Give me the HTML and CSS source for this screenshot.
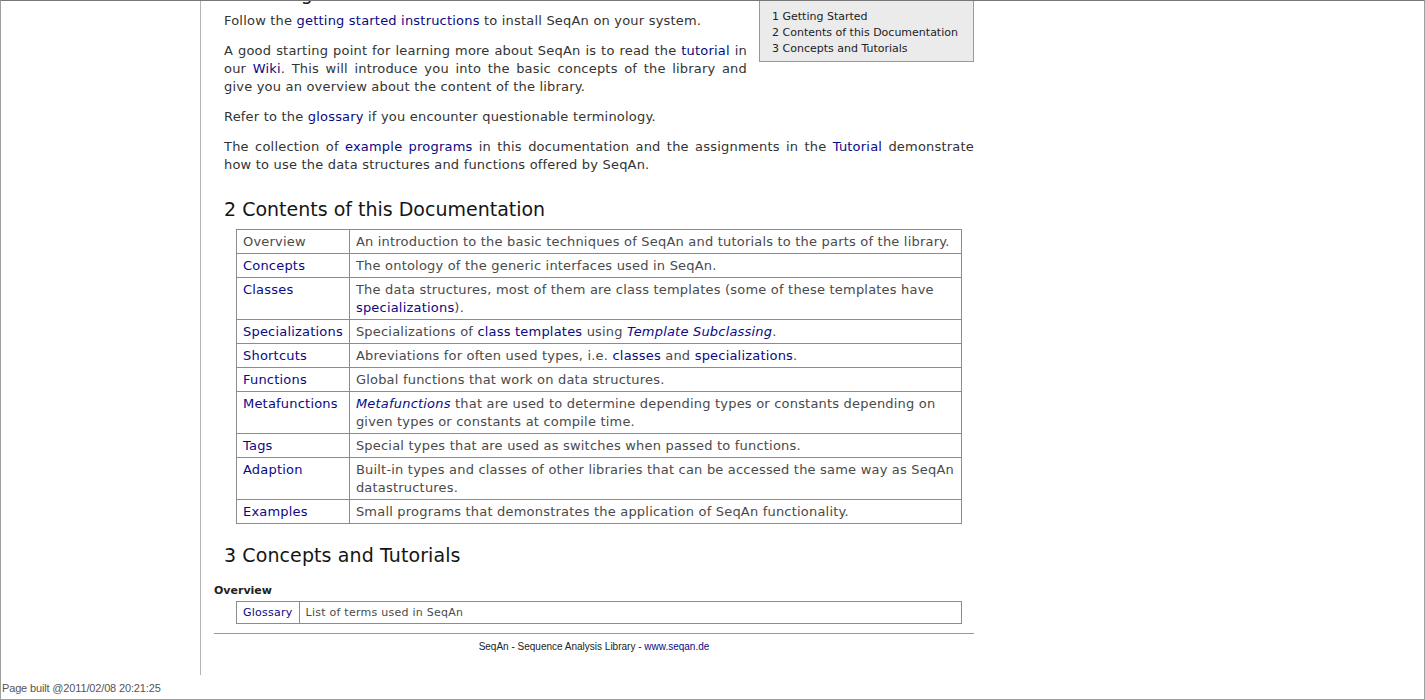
FILE: index.html
```html
<!DOCTYPE html>
<html>
<head>
<meta charset="utf-8">
<title>SeqAn Documentation</title>
<link rel="stylesheet" href="styles.css">
</head>
<body>
<div class="frame">
  <div class="layout">
    <div class="nav"></div>
    <div class="main">
      <div class="content">
        <div class="toc">
          <div class="toc-item">1 Getting Started</div>
          <div class="toc-item">2 Contents of this Documentation</div>
          <div class="toc-item">3 Concepts and Tutorials</div>
        </div>
        <h2 class="heading heading-first">1 Getting Started</h2>
        <p class="para">Follow the <a href="#">getting started instructions</a> to install SeqAn on your system.</p>
        <p class="para">A good starting point for learning more about SeqAn is to read the <a href="#">tutorial</a> in our <a href="#">Wiki</a>. This will introduce you into the basic concepts of the library and give you an overview about the content of the library.</p>
        <p class="para">Refer to the <a href="#">glossary</a> if you encounter questionable terminology.</p>
        <p class="para">The collection of <a href="#">example programs</a> in this documentation and the assignments in the <a href="#">Tutorial</a> demonstrate how to use the data structures and functions offered by SeqAn.</p>

        <h2 class="heading">2 Contents of this Documentation</h2>
        <table class="doc-table">
          <tr><td class="key plain">Overview</td><td>An introduction to the basic techniques of SeqAn and tutorials to the parts of the library.</td></tr>
          <tr><td class="key"><a href="#">Concepts</a></td><td>The ontology of the generic interfaces used in SeqAn.</td></tr>
          <tr><td class="key"><a href="#">Classes</a></td><td>The data structures, most of them are class templates (some of these templates have <a href="#">specializations</a>).</td></tr>
          <tr><td class="key"><a href="#">Specializations</a></td><td>Specializations of <a href="#">class templates</a> using <a href="#" class="em">Template Subclassing</a>.</td></tr>
          <tr><td class="key"><a href="#">Shortcuts</a></td><td>Abreviations for often used types, i.e. <a href="#">classes</a> and <a href="#">specializations</a>.</td></tr>
          <tr><td class="key"><a href="#">Functions</a></td><td>Global functions that work on data structures.</td></tr>
          <tr><td class="key"><a href="#">Metafunctions</a></td><td><a href="#" class="em">Metafunctions</a> that are used to determine depending types or constants depending on given types or constants at compile time.</td></tr>
          <tr><td class="key"><a href="#">Tags</a></td><td>Special types that are used as switches when passed to functions.</td></tr>
          <tr><td class="key"><a href="#">Adaption</a></td><td>Built-in types and classes of other libraries that can be accessed the same way as SeqAn datastructures.</td></tr>
          <tr><td class="key"><a href="#">Examples</a></td><td>Small programs that demonstrates the application of SeqAn functionality.</td></tr>
        </table>

        <h2 class="heading heading-third">3 Concepts and Tutorials</h2>
        <div class="subhead">Overview</div>
        <table class="doc-table small-table">
          <tr><td class="key-small"><a href="#">Glossary</a></td><td>List of terms used in SeqAn</td></tr>
        </table>
        <hr class="rule">
        <div class="footer">SeqAn - Sequence Analysis Library - <a href="#">www.seqan.de</a></div>
      </div>
    </div>
  </div>
  <div class="built">Page built @2011/02/08 20:21:25</div>
</div>
</body>
</html>
```

FILE: styles.css
```css
html, body {
  margin: 0;
  padding: 0;
  background: #ffffff;
}

body {
  font-family: "DejaVu Sans", Verdana, sans-serif;
  color: #333333;
}

a {
  color: #0a0a85;
  text-decoration: none;
}

a.em {
  font-style: italic;
}

.frame {
  width: 1425px;
  height: 700px;
  box-sizing: border-box;
  border: 1px solid #a0a0a0;
  border-top-color: #777777;
  overflow: hidden;
  display: flex;
  flex-direction: column;
}

.layout {
  display: flex;
  height: 674px;
  flex: none;
}

.nav {
  width: 200px;
  box-sizing: border-box;
  border-right: 1px solid #b4b4b4;
  flex: none;
}

.main {
  flex: 1;
  overflow: hidden;
}

.content {
  width: 760px;
  margin: -20px 0 0 13px;
}

.toc {
  float: right;
  width: 215px;
  box-sizing: border-box;
  margin-left: 12px;
  padding: 27px 8px 4px 12px;
  background: #ebebeb;
  border: 1px solid #999999;
  font-size: 11px;
  line-height: 16px;
  color: #222222;
}

.heading {
  font-size: 19px;
  line-height: 24px;
  font-weight: normal;
  color: #151515;
  margin: 23px 0 8px 10px;
}

.heading-first {
  margin: 0 0 7px 10px;
}

.heading-third {
  margin-top: 19px;
  letter-spacing: 0.1px;
}

.para {
  font-size: 13px;
  line-height: 18px;
  letter-spacing: 0.2px;
  text-align: justify;
  margin: 0 0 12px 10px;
}

.doc-table {
  border-collapse: collapse;
  width: 726px;
  margin: 0 0 0 22px;
  font-size: 13px;
  line-height: 18px;
  letter-spacing: 0.2px;
  color: #4a4a4a;
}

.doc-table td {
  border: 1px solid #8c8c8c;
  padding: 3px 6px 2px 6px;
  vertical-align: top;
}

.doc-table td.key {
  width: 98px;
  white-space: nowrap;
}

.doc-table td.plain {
  color: #4a4a4a;
}

.subhead {
  font-size: 11px;
  line-height: 16px;
  font-weight: bold;
  color: #222222;
  margin: 16px 0 2px 0;
}

.small-table {
  font-size: 11px;
  line-height: 16px;
  letter-spacing: 0.25px;
}

.small-table td.key-small {
  width: 10px;
  white-space: nowrap;
}

.rule {
  border: 0;
  border-top: 1px solid #999999;
  margin: 9px 0 5px 0;
  height: 0;
}

.footer {
  text-align: center;
  font-family: "Liberation Sans", Tahoma, sans-serif;
  font-size: 10px;
  line-height: 16px;
  color: #222222;
}

.built {
  font-family: "Liberation Sans", Tahoma, sans-serif;
  font-size: 11px;
  line-height: 16px;
  letter-spacing: -0.15px;
  color: #555555;
  padding: 5px 0 0 1px;
}
```
